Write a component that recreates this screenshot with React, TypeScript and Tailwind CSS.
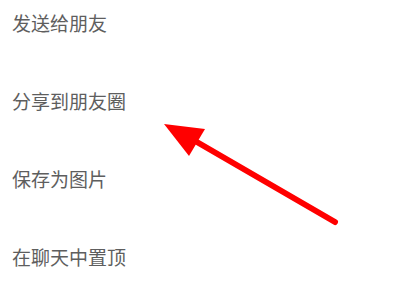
export default function App() {
  const items = ["发送给朋友", "分享到朋友圈", "保存为图片", "在聊天中置顶"];
  return (
    <div className="relative h-[300px] w-[400px] overflow-hidden bg-white">
      <div
        className="flex flex-col gap-[59px] pl-[12px] pt-[13px] text-[19px] leading-[19px] text-[#5e5e5e]"
        style={{ fontFamily: '"Noto Sans CJK SC", sans-serif' }}
      >
        {items.map((t) => (
          <div key={t}>{t}</div>
        ))}
      </div>
      <svg className="absolute left-0 top-0" width="400" height="300" viewBox="0 0 400 300">
        <line x1="335" y1="222" x2="190" y2="138" stroke="#ff0000" strokeWidth="6" strokeLinecap="round" />
        <polygon points="164,124 205,129 189,156" fill="#ff0000" />
      </svg>
    </div>
  );
}
